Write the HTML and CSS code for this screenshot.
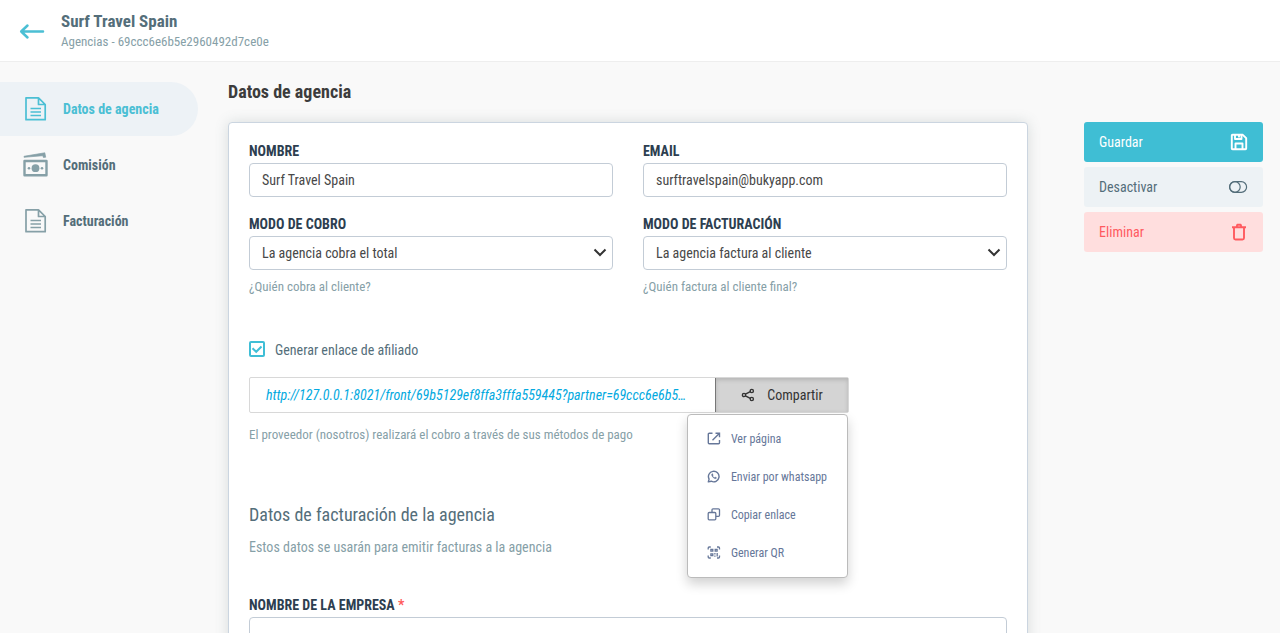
FILE: index.html
```html
<!DOCTYPE html>
<html lang="es">
<head>
<meta charset="utf-8">
<meta name="viewport" content="width=device-width, initial-scale=1">
<title>Surf Travel Spain</title>
<link rel="stylesheet" href="styles.css">
</head>
<body>
<div class="app">
  <header class="topbar">
    <a class="back" href="#" aria-label="Volver">
      <svg width="26" height="18" viewBox="0 0 26 18" fill="none" stroke="currentColor" stroke-width="2.500" stroke-linecap="round" stroke-linejoin="round"><path d="M24 9.500H2.500M8.500 3.500L2.200 9.500l6.300 6"/></svg>
    </a>
    <div class="heading">
      <h1 class="heading-title">Surf Travel Spain</h1>
      <p class="heading-sub">Agencias - 69ccc6e6b5e2960492d7ce0e</p>
    </div>
  </header>

  <div class="workspace">
    <nav class="sidebar">
      <a class="nav-item nav-item-active" href="#">
        <svg class="nav-icon" viewBox="0 0 26 26" fill="none" stroke="currentColor" stroke-width="1.700" stroke-linejoin="round"><path d="M3 1.800h12.500l6.700 6.700v15.200H3zM15.500 2v6.500h6.500"/><path d="M7.500 12.500h10.500M7.500 16h10.500M7.500 19.500h10.500"/></svg>
        <span>Datos de agencia</span>
      </a>
      <a class="nav-item" href="#">
        <svg class="nav-icon" viewBox="0 0 26 26" fill="none" stroke="currentColor"><path d="M1.500 9h22v14.200h-22z" stroke-width="2.400" stroke-linejoin="round"/><circle cx="12.500" cy="16.200" r="3.900" fill="currentColor" stroke="none"/><circle cx="6" cy="16.200" r="1.300" fill="currentColor" stroke="none"/><circle cx="19" cy="16.200" r="1.300" fill="currentColor" stroke="none"/><path d="M1 4.300L21.800 0.800l.9 4.400-2.400.2-.4-1.700L1 5.300z" fill="currentColor" stroke-width=".7" stroke-linejoin="round"/></svg>
        <span>Comisión</span>
      </a>
      <a class="nav-item" href="#">
        <svg class="nav-icon" viewBox="0 0 26 26" fill="none" stroke="currentColor" stroke-width="1.700" stroke-linejoin="round"><path d="M3 1.800h12.500l6.700 6.700v15.200H3zM15.500 2v6.500h6.500"/><path d="M7.500 12.500h10.500M7.500 16h10.500M7.500 19.500h10.500"/></svg>
        <span>Facturación</span>
      </a>
    </nav>

    <main class="content">
      <h2 class="section-title">Datos de agencia</h2>
      <form class="card">
        <div class="fields">
          <div class="field">
            <label class="label" for="nombre">NOMBRE</label>
            <input class="control" id="nombre" type="text" value="Surf Travel Spain">
          </div>
          <div class="field">
            <label class="label" for="email">EMAIL</label>
            <input class="control" id="email" type="email" value="surftravelspain@bukyapp.com">
          </div>
          <div class="field">
            <label class="label" for="cobro">MODO DE COBRO</label>
            <div class="select">
              <select class="control" id="cobro"><option>La agencia cobra el total</option></select>
              <svg class="chevron" width="14" height="10" viewBox="0 0 14 10" fill="none" stroke="currentColor" stroke-width="2"><path d="M1.500 1.500L7 7l5.500-5.500"/></svg>
            </div>
            <p class="hint">¿Quién cobra al cliente?</p>
          </div>
          <div class="field">
            <label class="label" for="facturacion">MODO DE FACTURACIÓN</label>
            <div class="select">
              <select class="control" id="facturacion"><option>La agencia factura al cliente</option></select>
              <svg class="chevron" width="14" height="10" viewBox="0 0 14 10" fill="none" stroke="currentColor" stroke-width="2"><path d="M1.500 1.500L7 7l5.500-5.500"/></svg>
            </div>
            <p class="hint">¿Quién factura al cliente final?</p>
          </div>
        </div>

        <div class="affiliate">
          <label class="check">
            <span class="check-mark">
              <input class="check-input" type="checkbox" checked>
              <svg class="check-tick" width="16" height="16" viewBox="0 0 16 16" fill="none" stroke="currentColor" stroke-width="2"><path d="M3.500 7.200l3.700 3.600L12.500 5.500"/></svg>
            </span>
            <span>Generar enlace de afiliado</span>
          </label>
          <div class="share">
            <a class="share-link" href="#">http://127.0.0.1:8021/front/69b5129ef8ffa3fffa559445?partner=69ccc6e6b5…</a>
            <button class="share-button" type="button" aria-expanded="true">
              <svg width="14" height="14" viewBox="0 0 14 14" fill="none" stroke="currentColor" stroke-width="1.400"><circle cx="3" cy="7" r="1.600"/><circle cx="10.800" cy="3" r="1.600"/><circle cx="10.800" cy="11" r="1.600"/><path d="M4.400 6.200l4.900-2.500M4.400 7.800l4.900 2.500"/></svg>
              <span>Compartir</span>
            </button>
            <div class="menu">
              <a class="menu-item" href="#">
                <svg class="menu-icon" viewBox="0 0 14 14" fill="none" stroke="currentColor" stroke-width="1.400"><path d="M5.500 1.300H2.200q-.9 0-.9.900v8.600q0 .9.900.9h9.400q.9 0 .9-.9V8M5.500 8.200l6.500-6.500M8.500 1.300h4v4"/></svg>
                <span>Ver página</span>
              </a>
              <a class="menu-item" href="#">
                <svg class="menu-icon" viewBox="0 0 14 14" fill="none" stroke="currentColor" stroke-width="1.400" stroke-linejoin="round"><path d="M1.300 11.900l.8-2.800A5.300 5.300 0 1 1 4.200 11.200z"/><path d="M5 3.800c-.8.600-.7 1.700.5 3.100 1.400 1.600 3 2.300 3.800 1.500l.4-.7-1.400-.8-.8.600c-.8-.3-1.400-.9-1.700-1.600l.5-.7L5.600 3.600z" fill="currentColor" stroke-width=".2"/></svg>
                <span>Enviar por whatsapp</span>
              </a>
              <a class="menu-item" href="#">
                <svg class="menu-icon" viewBox="0 0 14 14" fill="none" stroke="currentColor" stroke-width="1.300"><rect x="1.200" y="4.500" width="7.600" height="7.300" rx="1"/><path d="M5 4.500V1.800q0-1 1-1h5.500q1 0 1 1V7.300q0 1-1 1H9"/></svg>
                <span>Copiar enlace</span>
              </a>
              <a class="menu-item" href="#">
                <svg class="menu-icon" viewBox="0 0 14 14" fill="none" stroke="currentColor" stroke-width="1.300"><path d="M1.200 3.500V2q0-1 1-1h1.600M10 1h1.500q1 0 1 1v1.500M12.500 9.500v1.500q0 1-1 1H10M3.800 12H2.200q-1 0-1-1V9.500"/><path d="M3.900 3.300h1.900v1.900H3.900zM8.200 3.300h1.900v1.900H8.200zM3.900 7.800h1.900v1.900H3.900zM7.900 7v1.600M10.200 7v3.600M7.900 9.500v1.300"/></svg>
                <span>Generar QR</span>
              </a>
            </div>
          </div>
          <p class="note">El proveedor (nosotros) realizará el cobro a través de sus métodos de pago</p>
        </div>

        <section class="billing">
          <h3 class="billing-title">Datos de facturación de la agencia</h3>
          <p class="billing-sub">Estos datos se usarán para emitir facturas a la agencia</p>
          <div class="field">
            <label class="label" for="empresa">NOMBRE DE LA EMPRESA <span class="required">*</span></label>
            <input class="control" id="empresa" type="text" required>
          </div>
        </section>
      </form>
    </main>

    <aside class="actions">
      <button class="action action-save" type="button">
        <span>Guardar</span>
        <svg width="18" height="18" viewBox="0 0 18 18" fill="none" stroke="currentColor" stroke-width="1.900" stroke-linejoin="round"><path d="M2.600 1.800h10.200l3.400 3.400v10.200q0 .8-.8.800H2.600q-.8 0-.8-.8V2.600q0-.8.800-.8z"/><path d="M5 2v4h6.500V2M5.500 16v-5.500h7V16"/><path d="M9 2v2.500"/></svg>
      </button>
      <button class="action action-disable" type="button">
        <span>Desactivar</span>
        <svg width="20" height="18" viewBox="0 0 20 18" fill="none" stroke="currentColor" stroke-width="1.200"><rect x="1.600" y="3.700" width="17" height="10.600" rx="5.300"/><circle cx="6.900" cy="9" r="5.300"/></svg>
      </button>
      <button class="action action-delete" type="button">
        <span>Eliminar</span>
        <svg width="18" height="18" viewBox="0 0 18 18" fill="none" stroke="currentColor" stroke-width="1.900" stroke-linejoin="round"><path d="M2 4.200h14M4 4.200v10.800q0 1.500 1.500 1.500h7q1.500 0 1.500-1.500V4.200M6.500 4.200l.8-2.400h3.400l.8 2.400"/></svg>
      </button>
    </aside>
  </div>
</div>
</body>
</html>
```
FILE: styles.css
```css
* {
  box-sizing: border-box;
}

body {
  margin: 0;
  background: #f9f9f9;
  color: #546e7a;
  font: 400 14px/16px "Roboto Condensed", "Liberation Sans Narrow", Roboto, sans-serif;
}

h1, h2, h3, p {
  margin: 0;
}

a {
  color: inherit;
  text-decoration: none;
}

svg {
  display: block;
  flex: none;
}

input, select, button {
  margin: 0;
  font: inherit;
}

.app {
  display: flex;
  flex-direction: column;
  height: 100vh;
}

.topbar {
  display: flex;
  flex: none;
  align-items: center;
  gap: 16px;
  padding: 10px 19px;
  background: #fff;
  border-bottom: 1px solid #eee;
}

.back {
  color: #4bbfd4;
}

.heading-title {
  font-size: 17px;
  line-height: 22px;
  font-weight: 700;
}

.heading-sub {
  padding-top: 1px;
  font-size: 13px;
  line-height: 18px;
  color: #86a0a7;
}

.workspace {
  display: grid;
  flex: 1;
  grid-template-columns: 198px minmax(0, 1fr) 179px;
  align-items: start;
  min-height: 0;
  padding-right: 17px;
  overflow-y: auto;
  scrollbar-width: none;
}

.sidebar {
  display: flex;
  flex-direction: column;
  gap: 2px;
  padding-top: 20px;
}

.nav-item {
  display: flex;
  align-items: center;
  gap: 14px;
  height: 54px;
  padding-left: 23px;
  border-radius: 0 27px 27px 0;
  font-weight: 700;
}

.nav-item-active {
  background: #edf2f6;
  color: #4bbfd4;
}

.nav-icon {
  width: 26px;
  height: 26px;
  color: #86a0a7;
}

.nav-item-active .nav-icon {
  color: inherit;
}

.content {
  padding: 18px 56px 40px 30px;
}

.section-title {
  margin-bottom: 18px;
  font-size: 18px;
  line-height: 24px;
  font-weight: 700;
  color: #3c3c3c;
}

.card {
  padding: 20px;
  background: #fff;
  border: 1px solid #cbd5e0;
  border-radius: 4px;
  box-shadow: 0 0 14px rgba(84, 110, 110, 0.2);
}

.fields {
  display: grid;
  grid-template-columns: repeat(2, minmax(0, 1fr));
  gap: 19px 30px;
}

.field {
  display: flex;
  flex-direction: column;
}

.label {
  margin-bottom: 4px;
  font-weight: 700;
  color: #2d3e50;
}

.required {
  color: #ff5a5a;
}

.control {
  width: 100%;
  height: 34px;
  padding: 0 12px;
  appearance: none;
  background: #fff;
  border: 1px solid #c3ccd6;
  border-radius: 4px;
  color: #484848;
}

.select {
  display: grid;
  align-items: center;
}

.select > * {
  grid-area: 1 / 1;
}

.chevron {
  justify-self: end;
  margin-right: 6px;
  color: #333;
  pointer-events: none;
}

.hint,
.note {
  font-size: 13px;
  color: #86a0a7;
}

.hint {
  margin-top: 9px;
}

.affiliate {
  display: flex;
  flex-direction: column;
  margin-top: 46px;
}

.check {
  display: flex;
  align-items: flex-start;
  align-self: flex-start;
  gap: 10px;
}

.check-mark {
  display: grid;
  color: #3fbed6;
}

.check > span:last-child {
  line-height: 18px;
}

.check-mark > * {
  grid-area: 1 / 1;
}

.check-input {
  width: 16px;
  height: 16px;
  appearance: none;
  background: #fff;
  border: 2px solid #3fbed6;
  border-radius: 2px;
}

.check-tick {
  z-index: 1;
  visibility: hidden;
  pointer-events: none;
}

.check-input:checked + .check-tick {
  visibility: visible;
}

.share {
  position: relative;
  display: flex;
  width: 600px;
  max-width: 100%;
  height: 36px;
  margin: 18px 0 14px;
  border: 1px solid #d8d8d8;
  border-radius: 2px;
}

.share-link {
  flex: 1;
  min-width: 0;
  padding: 0 0 0 16px;
  overflow: hidden;
  line-height: 34px;
  font-style: italic;
  color: #03a9e0;
  text-overflow: ellipsis;
  white-space: nowrap;
}

.share-button {
  display: flex;
  align-items: center;
  justify-content: center;
  gap: 12px;
  width: 133px;
  padding: 0;
  background: #d4d4d4;
  border: 0;
  border-left: 1px solid #777;
  box-shadow: inset 0 2px 4px rgba(0, 0, 0, 0.15);
  color: #333;
}

.menu {
  position: absolute;
  top: 36px;
  right: 0;
  z-index: 2;
  padding: 5px 0;
  background: #fff;
  border: 1px solid #bbb;
  border-radius: 4px;
  box-shadow: 0 6px 12px rgba(0, 0, 0, 0.18);
}

.menu-item {
  display: flex;
  align-items: center;
  gap: 10px;
  height: 38px;
  padding: 0 20px 0 19px;
  font-size: 12px;
  color: #667799;
  white-space: nowrap;
}

.menu-icon {
  width: 14px;
  height: 14px;
}

.billing {
  margin-top: 60px;
}

.billing-title {
  font-size: 18px;
  line-height: 24px;
  font-weight: 400;
}

.billing-sub {
  margin: 12px 0 42px;
  color: #86a0a7;
}

.actions {
  display: flex;
  flex-direction: column;
  gap: 5px;
  padding-top: 60px;
}

.action {
  display: flex;
  align-items: center;
  justify-content: space-between;
  height: 40px;
  padding: 0 15px;
  border: 0;
  border-radius: 3px;
}

.action-save {
  background: #3fbed4;
  color: #fff;
}

.action-disable {
  background: #edf2f5;
  color: #546e7a;
}

.action-delete {
  background: #ffdede;
  color: #ff5a5f;
}
```
